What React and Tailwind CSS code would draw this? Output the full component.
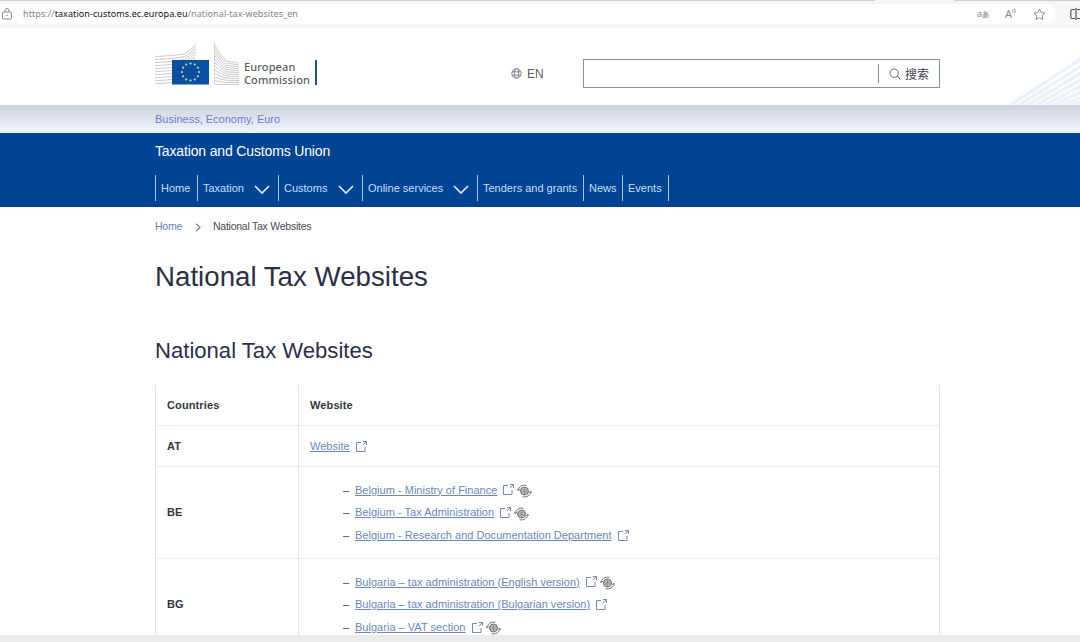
import React from "react"

const navItems = [
  { label: "Home", width: "w-[42px]" },
  { label: "Taxation", width: "w-[81px]", menu: true },
  { label: "Customs", width: "w-[84px]", menu: true },
  { label: "Online services", width: "w-[115px]", menu: true },
  { label: "Tenders and grants", width: "w-[106px]" },
  { label: "News", width: "w-[39px]" },
  { label: "Events", width: "w-[46px]" },
]

const countries = [
  {
    code: "BE",
    links: [
      { text: "Belgium - Ministry of Finance", translate: true },
      { text: "Belgium - Tax Administration", translate: true },
      { text: "Belgium - Research and Documentation Department" },
    ],
  },
  {
    code: "BG",
    links: [
      { text: "Bulgaria – tax administration (English version)", translate: true },
      { text: "Bulgaria – tax administration (Bulgarian version)" },
      { text: "Bulgaria – VAT section", translate: true },
    ],
  },
]

function ExternalIcon() {
  return (
    <svg className="ml-[6px] h-[11px] w-[11px] shrink-0" viewBox="0 0 11 11" fill="none" stroke="#7289b8" strokeWidth="1">
      <path d="M5 1.500H.5v9h8.500V6M7 .5h3.500V4M10.300.7 6.800 4.200" />
    </svg>
  )
}

function TranslateIcon() {
  return (
    <svg className="ml-[3px] mt-[2px] h-[14px] w-[15px] shrink-0" viewBox="0 0 15 14" fill="none" stroke="#666" strokeWidth="0.9">
      <circle cx="7.500" cy="7" r="4" fill="#c4c4c4" />
      <path d="M3.600 6h7.800M3.600 8h7.800M7.500 3v8" stroke="#777" strokeWidth=".6" />
      <path d="M1.200 6.500C1.500 3 5 .3 9.500 1.300M13.800 7.500c-.3 3.500-3.800 6.200-8.300 5.200" />
      <path d="M0 5.200l1.200 1.600 1.700-1.400M15 8.800l-1.200-1.600-1.700 1.400" />
    </svg>
  )
}

function Logo() {
  return (
    <svg className="h-[43px] w-[86px]" viewBox="0 0 86 43" fill="none">
      {/* building lines, left and right of the flag */}
      <clipPath id="wing">
        <path d="M0 0H41V17H17V42H0z" />
      </clipPath>
      {[0, 1, 2, 3, 4, 5, 6, 7, 8, 9].map((i) => (
        <path
          key={"l" + i}
          d={`M0 ${13.500 + i * 3.050}L17 ${12.500 + i * 3}L29 ${11 + i * 2.800}Q36 ${8 + i * 2.600} 41 ${0.500 + i * 2.800}`}
          stroke="#bcbec1"
          strokeWidth="0.8"
          clipPath="url(#wing)"
        />
      ))}
      {[0, 1, 2, 3, 4, 5, 6, 7, 8, 9, 10, 11].map((i) => (
        <path
          key={"r" + i}
          d={`M59 ${0.500 + i * 3.700}Q66 ${14 + i * 2.500} 72 ${18 + i * 2.150}L84 ${20 + i * 1.950}`}
          stroke="#bcbec1"
          strokeWidth="0.8"
        />
      ))}
      <path d="M59.500 0v42" stroke="#cccecf" strokeWidth="0.8" />
      <rect x="17" y="17" width="37" height="24.500" fill="#0b4ea2" />
      {[...Array(12)].map((_, i) => (
        <circle
          key={i}
          cx={35.500 + 8.600 * Math.cos((i * Math.PI) / 6)}
          cy={29 + 8.600 * Math.sin((i * Math.PI) / 6)}
          r="1.100"
          fill="#b9d3a0"
        />
      ))}
    </svg>
  )
}

function BrowserBar() {
  return (
    <div className="flex h-[28px] shrink-0 flex-col bg-[#f6f6f6] font-['Noto_Sans',sans-serif]">
      <div className="flex h-[4px] items-start">
        <div className="h-px w-[875px] bg-[#cfcfcf]" />
        <div className="ml-[79px] h-px flex-1 bg-[#cfcfcf]" />
      </div>
      <div className="flex h-[20px] items-center">
        <div className="flex h-full w-[1056px] items-center rounded-r-full bg-white pl-[2px]">
          <svg className="h-[12px] w-[10px]" viewBox="0 0 10 12" fill="none" stroke="#888" strokeWidth="1">
            <rect x=".5" y="4" width="9" height="7" rx="1" />
            <path d="M3 4V2.500a2 2 0 0 1 4 0V4" />
            <circle cx="5" cy="7.500" r=".3" fill="#888" />
          </svg>
          <p className="ml-[11px] flex-1 whitespace-nowrap text-[9px] tracking-[0.080px] text-[#858585]">
            https://<span className="text-[#111]">taxation-customs.ec.europa.eu</span>/national-tax-websites_en
          </p>
          <span className="text-[9.500px] text-[#888]">a</span>
          <span className="mr-[16px] font-['Noto_Sans_CJK_JP',sans-serif] text-[7px] font-medium text-[#888]">あ</span>
          <svg className="mr-[16px] h-[12px] w-[12px] overflow-visible" viewBox="0 0 12 12" fill="none" stroke="#858585" strokeWidth="1">
            <text x="0" y="10" fontSize="11" fill="#858585" stroke="none">A</text>
            <path d="M7.500 1.500q1.300 1.300 0 3M9.300.3q2 2.500 0 5" strokeWidth=".8" />
          </svg>
          <svg className="mr-[10px] h-[13px] w-[13px]" viewBox="0 0 24 24" fill="none" stroke="#858585" strokeWidth="1.800">
            <path strokeLinejoin="round" d="M12 2l3.100 6.300 6.900 1-5 4.900 1.200 6.900L12 17.800l-6.200 3.300L7 14.200 2 9.300l6.900-1z" />
          </svg>
        </div>
        <svg className="ml-[14px] h-[12px] w-[10px]" viewBox="0 0 10 12" fill="none" stroke="#555" strokeWidth="1.200">
          <path d="M5 1.500H2.200Q.8 1.500.8 3v6q0 1.500 1.400 1.500H5M6 0v12M7 1.500h6M7 10.500h6" />
        </svg>
      </div>
    </div>
  )
}

function SiteHeader() {
  return (
    <header className="shrink-0">
      <div className="relative flex h-[77px] items-start overflow-hidden bg-white pl-[155px]">
        {/* fan of pale stripes in the corner */}
        <svg className="absolute bottom-0 right-0 h-[47px] w-[72px]" viewBox="0 0 72 47" stroke="#edf1f8" strokeWidth="3.500">
          {[0, 1, 2, 3, 4, 5, 6, 7].map((i) => (
            <path key={i} d={`M${1 + i * 8.500} 48L${76 + i * 3} ${-1 + i * 5.300}`} />
          ))}
        </svg>
        <div className="mt-[15px] flex w-[165px] items-start">
          <Logo />
          <p className="ml-[3px] mt-[18px] whitespace-nowrap font-['Noto_Sans',sans-serif] text-[11px] font-medium leading-[12.500px] tracking-[0.120px] text-[#5b5d62]">
            European
            <br />
            Commission
          </p>
          <div className="ml-[5px] mt-[17px] h-[25px] w-[2px] shrink-0 bg-[#1d5396]" />
        </div>
        <div className="ml-[191px] mt-[38px] flex h-[16px] w-[72px] items-center text-[12px] text-[#5a5d63]">
          <svg className="mb-px mr-[5px] h-[11px] w-[11px]" viewBox="0 0 11 11" fill="none" stroke="#777" strokeWidth=".9">
            <circle cx="5.500" cy="5.500" r="4.700" />
            <ellipse cx="5.500" cy="5.500" rx="2.200" ry="4.700" />
            <path d="M1.200 3.800h8.600M1.200 7.200h8.600" />
          </svg>
          EN
        </div>
        <div className="mt-[31px] flex h-[29px] w-[357px] items-center border border-[#8b9094]">
          <div className="h-full flex-1" />
          <div className="flex h-[19px] w-[61px] items-center border-l border-[#8b9094] pl-[10px]">
            <svg className="h-[12px] w-[12px]" viewBox="0 0 12 12" fill="none" stroke="#60656c" strokeWidth="1">
              <circle cx="5.200" cy="5.200" r="4.200" />
              <path d="M8.300 8.300l3 3" />
            </svg>
            <span className="ml-[4px] font-['Noto_Sans_CJK_SC',sans-serif] text-[12px] leading-none text-[#3f444b]">搜索</span>
          </div>
        </div>
      </div>
      <div className="flex h-[28px] items-center bg-linear-to-b from-[#cdd1da] via-[#e0e4ef] to-[#edf3fb] pl-[155px] text-[11px] text-[#6a80cb]">
        Business, Economy, Euro
      </div>
      <div className="h-[74px] bg-[#004494] pl-[155px] text-white">
        <p className="pt-[7px] text-[14px] leading-[22px] tracking-[-0.150px]">Taxation and Customs Union</p>
        <nav className="mt-[13px] flex h-[26px] text-[11px] text-[#c9dcf5]">
          {navItems.map((item) => (
            <div key={item.label} className={`flex items-center whitespace-nowrap border-l border-[#a9c4e4] pl-[5px] ${item.width}`}>
              {item.label}
              {item.menu && (
                <svg className="ml-auto mr-[8px] mt-[2px] h-[9px] w-[16px]" viewBox="0 0 16 9" fill="none" stroke="#dbeaff" strokeWidth="1.700">
                  <path d="M1 1l7 7 7-7" />
                </svg>
              )}
            </div>
          ))}
          <div className="w-px bg-[#a9c4e4]" />
        </nav>
      </div>
    </header>
  )
}

function Row({ code, height, children }) {
  return (
    <div className={`flex border-b border-[#e8ebee] ${height}`}>
      <div className="flex w-[143px] shrink-0 items-center border-l border-[#e0e3e7] pl-[11px] font-bold tracking-[0.120px] text-[#33373f]">{code}</div>
      <div className="flex flex-1 items-center border-x border-[#e0e3e7] pl-[11px]">{children}</div>
    </div>
  )
}

function Link({ text, translate }) {
  return (
    <>
      <a className="whitespace-nowrap tracking-[0.020px] text-[#6c86b5] underline underline-offset-1">{text}</a>
      <ExternalIcon />
      {translate && <TranslateIcon />}
    </>
  )
}

function App() {
  return (
    <div className="flex h-[642px] w-[1080px] flex-col overflow-hidden bg-white font-['Liberation_Sans',Arial,sans-serif]">
      <BrowserBar />
      <SiteHeader />
      <main className="min-h-0 flex-1 overflow-hidden pl-[155px]">
        <div className="mt-[11px] flex h-[18px] items-center text-[10.500px] tracking-[-0.250px] text-[#474b54]">
          <span className="w-[26px] text-[#6c7eae]">Home</span>
          <svg className="ml-[14px] mr-[12px] h-[9px] w-[6px]" viewBox="0 0 6 9" fill="none" stroke="#68779d" strokeWidth="1.100">
            <path d="M1 .7l4 3.800-4 3.800" />
          </svg>
          National Tax Websites
        </div>
        <h1 className="mt-[23px] text-[27.700px] leading-[36px] text-[#2b3048]">National Tax Websites</h1>
        <h2 className="mt-[42px] text-[22.100px] leading-[28px] text-[#2b3048]">National Tax Websites</h2>
        <div className="mt-[19px] w-[785px] text-[11px]">
          <Row code="Countries" height="h-[42px] pt-px">
            <b className="tracking-[0.120px] text-[#33373f]">Website</b>
          </Row>
          <Row code="AT" height="h-[41px]">
            <Link text="Website" />
          </Row>
          {countries.map((country) => (
            <Row key={country.code} code={country.code} height="h-[92px]">
              <ul className="pl-[33px]">
                {country.links.map((link) => (
                  <li key={link.text} className="flex h-[22.700px] items-center">
                    <span className="w-[12px] text-[#444]">–</span>
                    <Link {...link} />
                  </li>
                ))}
              </ul>
            </Row>
          ))}
        </div>
      </main>
      <div className="h-[7px] shrink-0 bg-[#ebebeb]" />
    </div>
  )
}

export default App;
